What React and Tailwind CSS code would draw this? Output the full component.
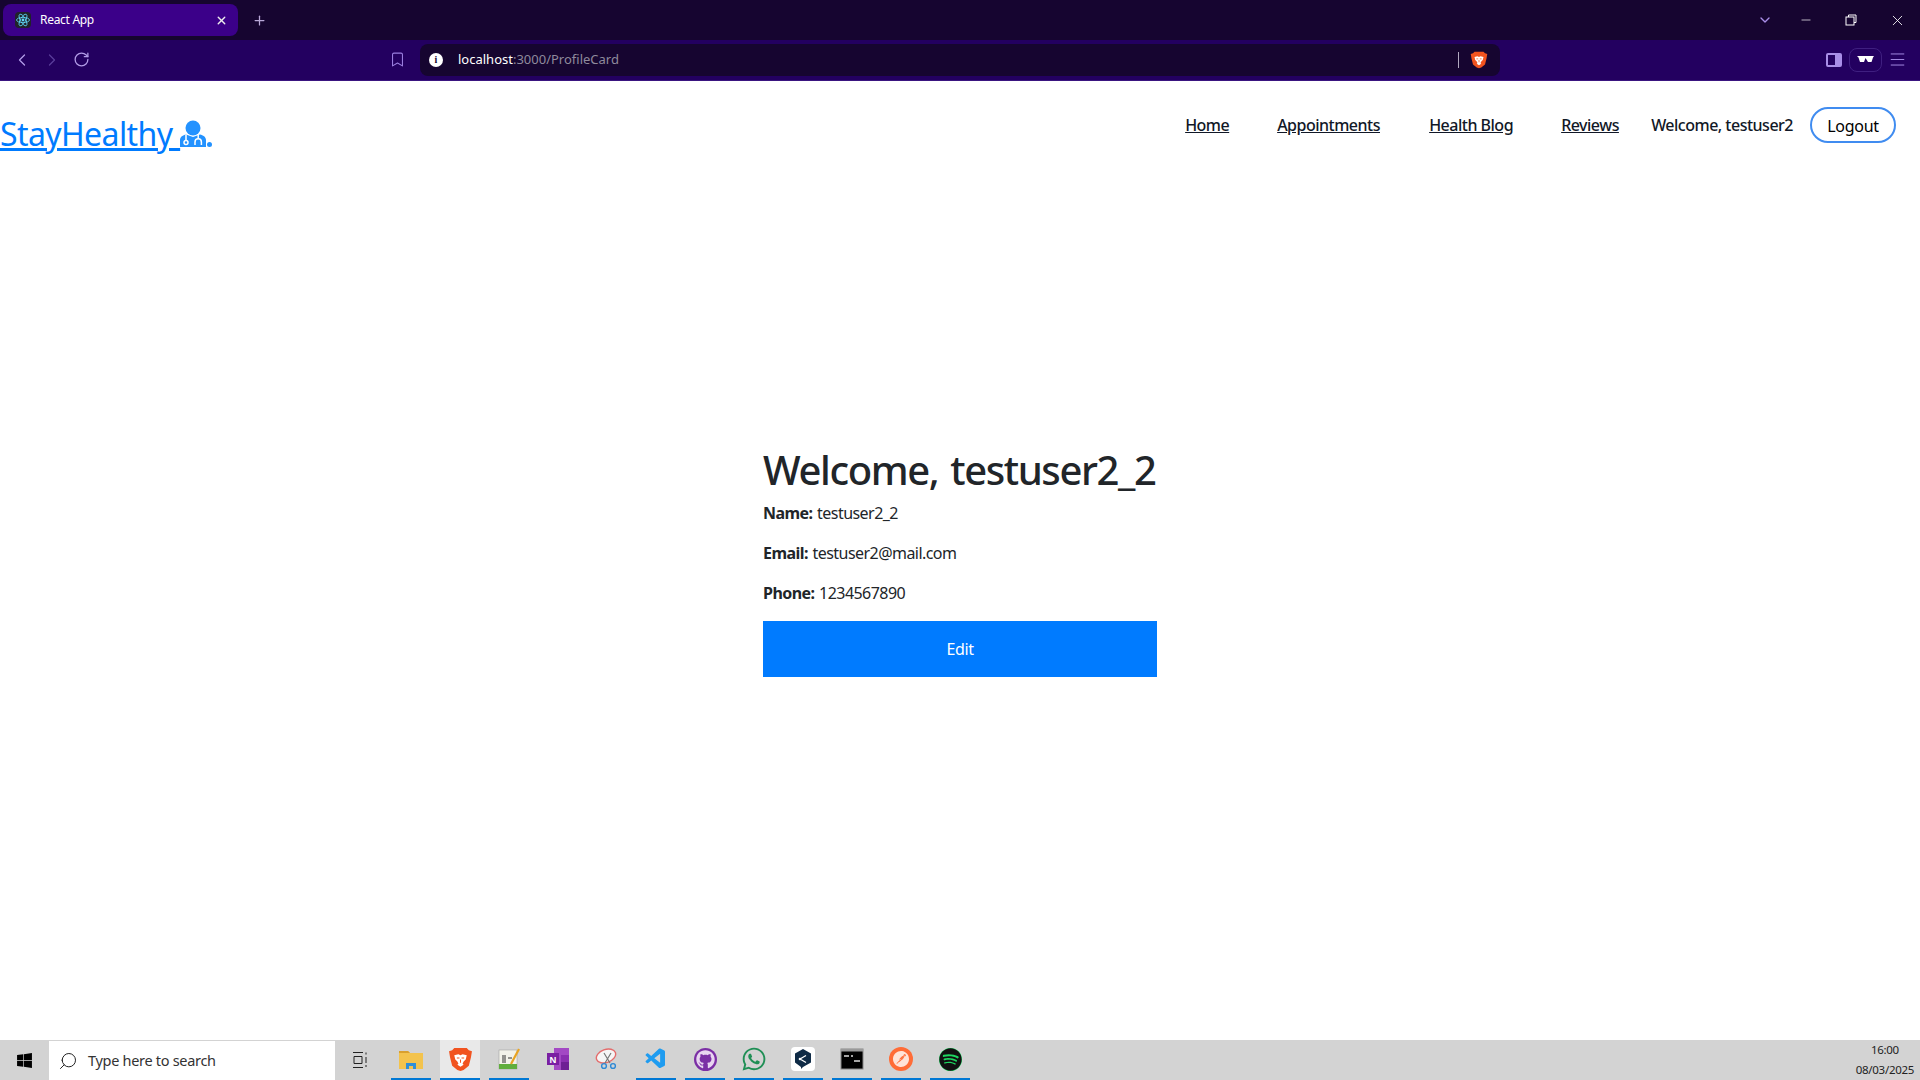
import { ChevronDown, ChevronLeft, ChevronRight, Menu, Plus, RotateCw, Search, X, Bookmark, Minus } from "lucide-react";
import { FaWindows, FaGithub, FaWhatsapp, FaSpotify } from "react-icons/fa";
import { SiPostman } from "react-icons/si";
import { VscVscode } from "react-icons/vsc";

const navLinks = [
  { label: "Home", width: "w-[44px]" },
  { label: "Appointments", width: "w-[104px]" },
  { label: "Health Blog", width: "w-[84px]" },
  { label: "Reviews", width: "w-[58px]" },
];

function ReactFavicon() {
  return (
    <svg width="16" height="16" viewBox="0 0 16 16" className="rounded-sm bg-[#20232a]">
      <circle cx="8" cy="8" r="1.4" fill="#61dafb" />
      <g fill="none" stroke="#61dafb" strokeWidth="0.8">
        <ellipse cx="8" cy="8" rx="6.5" ry="2.6" />
        <ellipse cx="8" cy="8" rx="6.5" ry="2.6" transform="rotate(60 8 8)" />
        <ellipse cx="8" cy="8" rx="6.5" ry="2.6" transform="rotate(120 8 8)" />
      </g>
    </svg>
  );
}

function BraveIcon({ size }) {
  return (
    <svg width={size} height={size} viewBox="0 0 24 24">
      <path d="M6 1h12l2 2 3 1-1 6-2 8-5 4-3 1-3-1-5-4-2-8-1-6 3-1z" fill="#f1531f" />
      <path d="M6 8l4-1 2 1 2-1 4 1-1 4-2 2-1 2 1 1-3 2-3-2 1-1-1-2-2-2z" fill="#fff" />
      <path d="M8.5 10.5h2.5M13 10.5h2.5M12 12v3" stroke="#f1531f" strokeWidth="1" />
    </svg>
  );
}

function DoctorIcon() {
  return (
    <svg width="26" height="28" viewBox="0 0 26 28" className="shrink-0 mb-[8px]">
      <circle cx="13" cy="8" r="7.5" fill="#2392ff" />
      <path d="M0 27v-7c0-3 3-5 6-5.500l7 2.500 7-2.500c3 .5 6 2.500 6 5.500v7z" fill="#2392ff" />
      <circle cx="6" cy="22.500" r="2" fill="none" stroke="#fff" strokeWidth="1.5" />
      <path d="M6 20.500v-6" stroke="#fff" strokeWidth="1.5" />
      <path d="M15 25v-3a3.200 3.200 0 0 1 6.400 0v3" fill="none" stroke="#fff" strokeWidth="1.5" />
      <path d="M18.200 18.800v-4" stroke="#fff" strokeWidth="1.5" />
    </svg>
  );
}

function TitleBar() {
  return (
    <div className="h-10 bg-[#160530] flex items-center pl-[3px] text-white">
      <div className="w-[235px] h-8 bg-[#3b0089] rounded-lg flex items-center pl-[12px] pr-[10px]">
        <ReactFavicon />
        <span className="ml-[9px] text-[12px] tracking-[-0.3px] font-['Noto_Sans',sans-serif] flex-1">React App</span>
        <X size={13} strokeWidth={2.5} className="text-[#eee]" />
      </div>
      <Plus size={15} className="ml-[14px] text-[#b9a8d8]" />
      <div className="ml-auto flex items-center">
        <ChevronDown size={16} className="text-[#a98ee8] mr-[26px]" />
        <Minus size={14} strokeWidth={1.2} className="mr-[32px]" />
        <svg width="12" height="12" viewBox="0 0 12 12" className="mr-[32px]" fill="none" stroke="#fff">
          <path d="M3.5 3V1h7.5v7.5H9" />
          <rect x="1" y="3" width="8" height="8" />
        </svg>
        <X size={17} strokeWidth={1.2} className="mr-[14px]" />
      </div>
    </div>
  );
}

function Toolbar() {
  return (
    <div className="h-[41px] bg-[#230060] border-b border-[#3a1580] flex items-center pb-px">
      <ChevronLeft size={20} strokeWidth={1.5} className="ml-[12px] text-[#b39ce8]" />
      <ChevronRight size={20} strokeWidth={1.5} className="ml-[10px] text-[#5a3d9a]" />
      <RotateCw size={17} strokeWidth={1.8} className="ml-[11px] text-[#b39ce8]" />
      <Bookmark size={17} strokeWidth={1.5} className="ml-[299px] text-[#9b7fe0]" />
      <div className="ml-[14px] w-[1080px] h-8 bg-[#160530] rounded-lg flex items-center pl-[9px] pr-[12px]">
        <span className="w-[14px] h-[14px] rounded-full bg-white text-[#160530] text-[10px] font-bold flex items-center justify-center font-['Liberation_Serif',serif]">i</span>
        <span className="ml-[15px] text-[13px] font-['Noto_Sans',sans-serif] text-white">
          localhost<span className="text-[#8f8a9c]">:3000/ProfileCard</span>
        </span>
        <div className="ml-auto w-px h-4 bg-[#b0a8c0]" />
        <div className="ml-[11px] flex"><BraveIcon size={18} /></div>
      </div>
      <div className="ml-auto flex items-center mr-[13px]">
        <div className="w-4 h-[14px] border-2 border-[#a98ee8] flex justify-end rounded-[2px]">
          <div className="w-[5px] bg-[#a98ee8]" />
        </div>
        <div className="ml-[7px] w-[33px] h-6 rounded-lg border border-[#3f1f80] flex items-center justify-center">
          <svg width="17" height="7" viewBox="0 0 17 7" fill="#fff">
            <path d="M0 0h17l-1 1.500-1.500 4.500h-3.500L8.500 2 7 6H3L1.500 1.500z" />
          </svg>
        </div>
        <Menu size={19} strokeWidth={1.2} className="ml-[6px] text-[#a98ee8]" />
      </div>
    </div>
  );
}

function Header() {
  return (
    <header className="flex items-start justify-between h-[90px] font-['Noto_Sans',sans-serif]">
      <a href="#" className="mt-[31px] flex items-end text-[32px] leading-[44px] tracking-[-0.6px] text-[#007bff]">
        <span className="underline whitespace-pre">StayHealthy </span>
        <DoctorIcon />
        <span className="w-[5px] h-[5px] ml-[1px] mb-[9px] rounded-full bg-[#2392ff]" />
      </a>
      <nav className="flex items-center mt-[26px] text-[16px] text-[#111827] mr-[24px]">
        {navLinks.map((link) => (
          <a key={link.label} href="#" className={`mr-[48px] underline font-medium tracking-[-0.5px] whitespace-nowrap ${link.width}`}>
            {link.label}
          </a>
        ))}
        <span className="-ml-[16px] font-medium tracking-[-0.5px] whitespace-nowrap">Welcome, testuser2</span>
        <button className="ml-[17px] w-[86px] h-[36px] pt-px rounded-[18px] border-2 border-[#408cf0] text-[#000] tracking-[-0.3px]">
          Logout
        </button>
      </nav>
    </header>
  );
}

function ProfileCard() {
  return (
    <main className="flex-1 flex justify-center pt-[273px] font-['Noto_Sans',sans-serif] text-[#212529]">
      <div className="w-[394px]">
        <h1 className="text-[40px] leading-[52px] font-medium tracking-[-1.4px] [word-spacing:3px] whitespace-nowrap mb-[5px]">Welcome, testuser2_2</h1>
        <p className="text-[16px] leading-[24px] tracking-[-0.55px] [word-spacing:1px] mb-4"><strong className="font-bold">Name:</strong> testuser2_2</p>
        <p className="text-[16px] leading-[24px] tracking-[-0.55px] [word-spacing:1px] mb-4"><strong className="font-bold">Email:</strong> testuser2@mail.com</p>
        <p className="text-[16px] leading-[24px] tracking-[-0.55px] [word-spacing:1px] mb-4"><strong className="font-bold">Phone:</strong> 1234567890</p>
        <button className="w-full h-14 bg-[#007bff] text-white text-[16px] tracking-[-0.4px]">Edit</button>
      </div>
    </main>
  );
}

function TaskItem({ active, highlight, children }) {
  return (
    <div className={`w-[40px] h-10 flex items-center justify-center border-b-2 ${active ? "border-[#0078d4]" : "border-transparent"} ${highlight ? "bg-[#e9e9e9]" : ""}`}>
      {children}
    </div>
  );
}

function Taskbar() {
  return (
    <footer className="h-10 bg-[#d3d3d3] flex items-center font-['Noto_Sans',sans-serif]">
      <div className="w-[49px] flex justify-center">
        <FaWindows size={17} className="text-black" />
      </div>
      <div className="w-[286px] h-[39px] mt-px bg-white flex items-center pl-[9px]">
        <Search size={20} strokeWidth={1.2} className="text-[#222] -scale-x-100" />
        <span className="ml-[10px] text-[14.5px] tracking-[-0.3px] text-[#333]">Type here to search</span>
      </div>
      <div className="w-[50px] flex justify-center">
        <svg width="16" height="16" viewBox="0 0 16 16" fill="none" stroke="#222">
          <path d="M1 .5h10M1 15.500h10M2 4.500h8v7H2zM14 .5v2M14 5v6M14 13v2" />
        </svg>
      </div>
      <div className="ml-[6px] flex items-center gap-[9px]">
        <TaskItem active>
          <svg width="24" height="20" viewBox="0 0 24 20">
            <path d="M0 2h9l2 2h13v16H0z" fill="#f3c34d" />
            <path d="M0 2h9l2 2H0z" fill="#d9a02e" />
            <path d="M7 20v-6h10v6h-3v-3h-4v3z" fill="#2f8fd8" />
          </svg>
        </TaskItem>
        <TaskItem active highlight>
          <BraveIcon size={25} />
        </TaskItem>
        <TaskItem active>
          <svg width="24" height="24" viewBox="0 0 24 24">
            <rect x="2" y="3" width="18" height="19" fill="#f2f2ea" stroke="#999" strokeWidth="0.5" />
            <rect x="2" y="17" width="18" height="5" fill="#5fae3c" />
            <path d="M6 8v8M8 8v8M11 11h4" stroke="#333" strokeWidth="1" />
            <path d="M22 2L14 17" stroke="#e8a321" strokeWidth="2.200" />
          </svg>
        </TaskItem>
        <TaskItem>
          <svg width="24" height="24" viewBox="0 0 24 24">
            <rect x="8" y="1" width="15" height="22" fill="#a349c4" />
            <rect x="15" y="8" width="8" height="7" fill="#8a2fb0" />
            <rect x="15" y="15" width="8" height="8" fill="#6e1f94" />
            <rect x="1" y="6" width="12" height="12" fill="#7a1fa2" />
            <text x="3.400" y="15.500" fontSize="9.500" fontWeight="700" fill="#fff" fontFamily="Liberation Sans, sans-serif">N</text>
          </svg>
        </TaskItem>
        <TaskItem>
          <svg width="24" height="24" viewBox="0 0 24 24" fill="none">
            <ellipse cx="11" cy="9" rx="10" ry="6.500" stroke="#e46c6c" strokeWidth="1.400" fill="#f5f5f5" transform="rotate(-20 11 9)" />
            <path d="M9 6l6 10M16 6l-6 10" stroke="#777" strokeWidth="1.200" />
            <circle cx="9" cy="19" r="2.400" stroke="#2d89d6" strokeWidth="1.400" />
            <circle cx="18" cy="19" r="2.400" stroke="#2d89d6" strokeWidth="1.400" />
          </svg>
        </TaskItem>
        <TaskItem active>
          <VscVscode size={24} className="text-[#1f9cf0]" />
        </TaskItem>
        <TaskItem active>
          <div className="w-[23px] h-[23px] rounded-full bg-[#7b2fa5] flex items-center justify-center">
            <FaGithub size={19} className="text-[#e8d5f0]" />
          </div>
        </TaskItem>
        <TaskItem active>
          <FaWhatsapp size={26} className="text-[#1f8f55]" />
        </TaskItem>
        <TaskItem active>
          <div className="w-6 h-6 rounded-sm bg-white flex items-center justify-center">
            <svg width="18" height="20" viewBox="0 0 18 20">
              <path d="M9 0l8 4.500v9L9 18l-2 2v-2L1 13.500v-9z" fill="#0f2b46" />
              <path d="M6 10l6-3.500M6 10l6 3.500" stroke="#fff" strokeWidth="1.300" />
              <circle cx="6" cy="10" r="1.300" fill="#fff" />
            </svg>
          </div>
        </TaskItem>
        <TaskItem active>
          <svg width="24" height="22" viewBox="0 0 24 22">
            <rect x="1" y="1" width="22" height="20" fill="#000" stroke="#888" />
            <rect x="1" y="1" width="22" height="2.500" fill="#9a9a9a" />
            <path d="M4 8h5M11 8h2M14 13h6" stroke="#ddd" strokeWidth="1.400" />
          </svg>
        </TaskItem>
        <TaskItem active>
          <div className="w-6 h-6 rounded-full bg-[#ff6c37] flex items-center justify-center">
            <SiPostman size={16} className="text-[#ffe3d8]" />
          </div>
        </TaskItem>
        <TaskItem active>
          <div className="w-[23px] h-[23px] rounded-full bg-[#1ed760] flex items-center justify-center">
            <FaSpotify size={23} className="text-[#111]" />
          </div>
        </TaskItem>
      </div>
      <div className="ml-auto mr-[6px] text-[11.5px] leading-[20px] text-center text-[#222] tracking-[-0.3px]">
        <div>16:00</div>
        <div>08/03/2025</div>
      </div>
    </footer>
  );
}

export default function App() {
  return (
    <div className="w-[1920px] h-[1080px] flex flex-col bg-white overflow-hidden">
      <TitleBar />
      <Toolbar />
      <Header />
      <ProfileCard />
      <Taskbar />
    </div>
  );
}
